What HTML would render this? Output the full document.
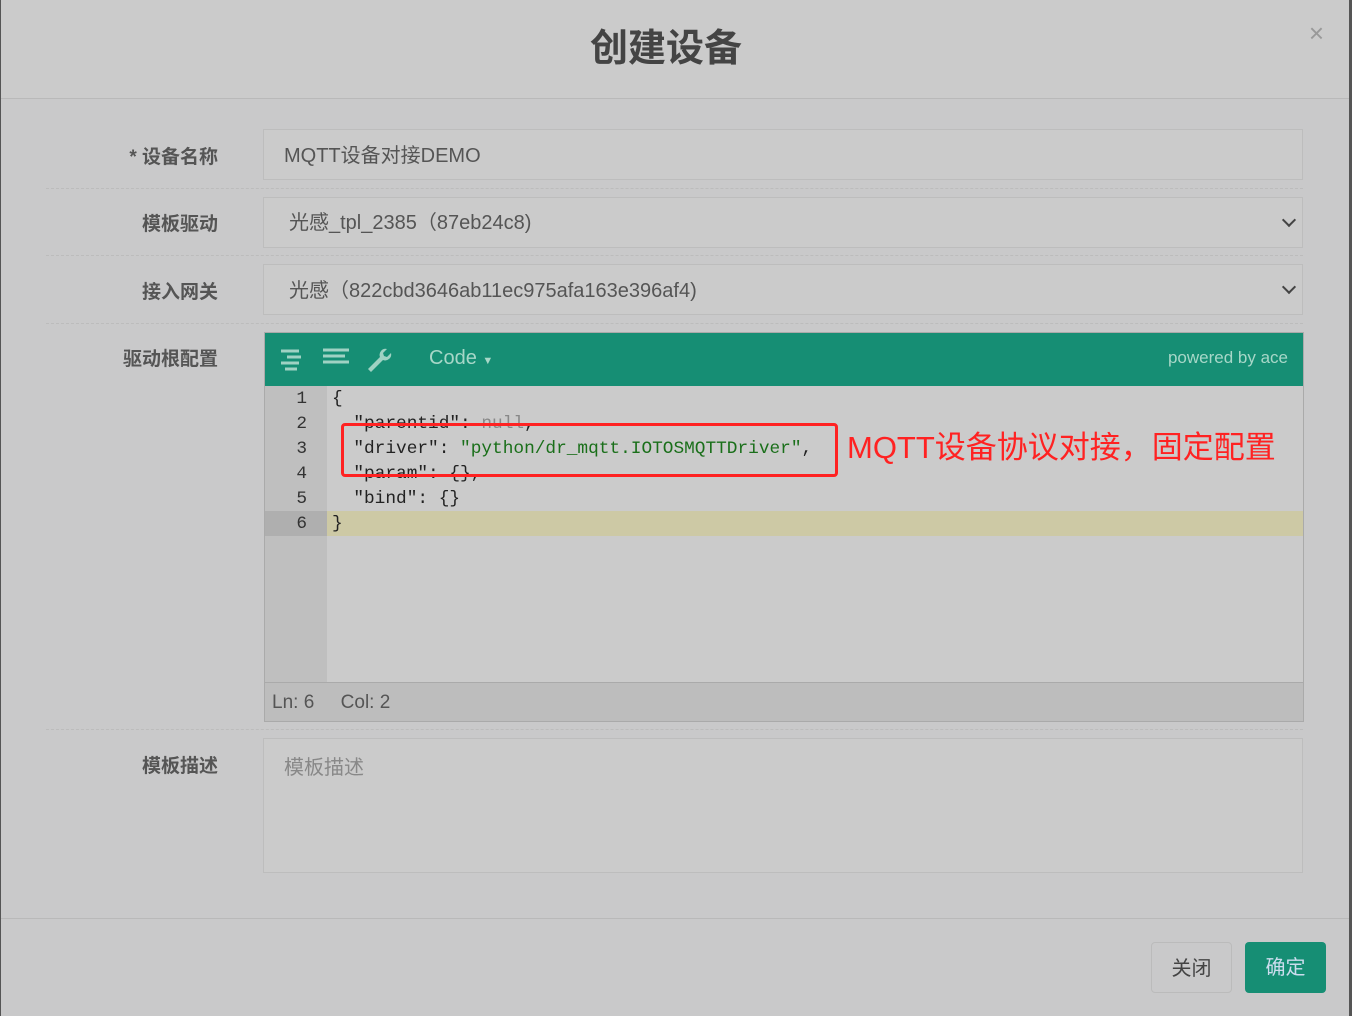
<!DOCTYPE html><html><head><meta charset="utf-8"><style>
*{box-sizing:border-box;margin:0;padding:0}
body{width:1352px;height:1016px;background:#555;font-family:"Liberation Sans","Noto Sans CJK SC",sans-serif;position:relative;overflow:hidden}
.modal{position:absolute;left:1px;top:0;width:1348px;height:1016px;background:#c9c9ca}
.hd{height:99px;background:#cbcbcb;border-bottom:1px solid #b9b9b9;text-align:center}
.hd h1{font-size:38px;line-height:99px;color:#444;font-weight:bold;margin-right:18px}
.x{position:absolute;right:25px;top:18px;font-size:26px;color:#999}
.lbl{position:absolute;right:1131px;font-size:19px;font-weight:bold;color:#555;text-align:right;white-space:nowrap}
.inp{position:absolute;left:262px;width:1040px;border:1px solid #bdbdbd;background:#cbcbcb;font-size:20px;color:#555;padding-left:20px}
.sep{position:absolute;left:45px;width:1257px;border-top:1px dashed #bcbcbc}
.chev{position:absolute;right:8px;top:17px;width:10px;height:10px;border-right:2px solid #444;border-bottom:2px solid #444;transform:rotate(45deg)}
.ed{position:absolute;left:263px;top:332px;width:1040px;height:390px;border:1px solid #aaa;background:#cbcbcb}
.tb{height:53px;background:#168e74;position:relative}
.gut{position:absolute;left:0;top:53px;width:62px;height:296px;background:#bfbfbf}
.code{font-family:"Liberation Mono",monospace;font-size:17.8px;line-height:25px;position:absolute;top:54px;left:0;width:100%}
.ln{position:absolute;left:0;width:42px;text-align:right;color:#333}
.tx{position:absolute;left:67px;color:#222;white-space:pre}
.st{position:absolute;left:0;bottom:0;width:100%;height:39px;background:#bdbdbd;border-top:1px solid #aaa;font-size:19px;color:#555;line-height:40px;padding-left:7px}
</style></head><body>
<div class="modal">
<div class="hd"><h1>创建设备</h1></div>
<div class="x">×</div>
<div class="lbl" style="top:142px">* 设备名称</div>
<div class="inp" style="top:129px;height:51px;line-height:52px">MQTT设备对接DEMO</div>
<div class="sep" style="top:188px"></div>
<div class="lbl" style="top:209px">模板驱动</div>
<div class="inp" style="top:197px;height:51px;line-height:51px;padding-left:25px">光感_tpl_2385（87eb24c8)<span class="chev"></span></div>
<div class="sep" style="top:255px"></div>
<div class="lbl" style="top:277px">接入网关</div>
<div class="inp" style="top:264px;height:51px;line-height:52px;padding-left:25px">光感（822cbd3646ab11ec975afa163e396af4)<span class="chev"></span></div>
<div class="sep" style="top:323px"></div>
<div class="lbl" style="top:344px">驱动根配置</div>
<div class="ed">
<div class="tb">
<svg style="position:absolute;left:14px;top:14px" width="120" height="26"><g stroke="#9fd2c3" stroke-width="3"><path d="M2 4h18M8 10h14M2 16h18M6 22h12"/><path d="M44 3h26M44 9h22M44 15h26"/></g><path d="M108 6a6 6 0 0 0-7 8L89 26l3 3 12-12a6 6 0 0 0 8-7l-4 4-3-1-1-3z" fill="#9fd2c3" transform="translate(0,-4)"/></svg>
<span style="position:absolute;left:164px;top:14px;font-size:20px;color:#a7d7c8">Code <span style="font-size:11px">▼</span></span>
<span style="position:absolute;right:15px;top:15px;font-size:17px;color:#a7d7c8">powered by ace</span>
</div>
<div class="gut"></div>
<div style="position:absolute;left:0;top:178px;width:62px;height:25px;background:#afafaf"></div>
<div style="position:absolute;left:62px;top:178px;right:0;height:25px;background:#cdc9a5"></div>
<div class="code">
<div class="ln" style="top:0">1</div><div class="ln" style="top:25px">2</div><div class="ln" style="top:50px">3</div><div class="ln" style="top:75px">4</div><div class="ln" style="top:100px">5</div><div class="ln" style="top:125px">6</div>
<div class="tx" style="top:0">{</div>
<div class="tx" style="top:25px">  "parentid": <span style="color:#888">null</span>,</div>
<div class="tx" style="top:50px">  "driver": <span style="color:#1a6f1a">"python/dr_mqtt.IOTOSMQTTDriver"</span>,</div>
<div class="tx" style="top:75px">  "param": {},</div>
<div class="tx" style="top:100px">  "bind": {}</div>
<div class="tx" style="top:125px">}</div>
</div>
<div class="st">Ln: 6 &nbsp; &nbsp; Col: 2</div>
</div>
<div style="position:absolute;left:340px;top:423px;width:497px;height:54px;border:3px solid #f22;border-radius:4px"></div>
<div style="position:absolute;left:846px;top:422px;font-size:31px;color:#f22;white-space:nowrap">MQTT设备协议对接，固定配置</div>
<div class="sep" style="top:729px"></div>
<div class="lbl" style="top:751px">模板描述</div>
<div class="inp" style="top:738px;height:135px;padding-top:12px;color:#888">模板描述</div>
<div style="position:absolute;left:0;top:918px;width:100%;border-top:1px solid #b9b9b9"></div>
<div style="position:absolute;left:1150px;top:942px;width:81px;height:51px;border:1px solid #bbb;border-radius:4px;text-align:center;line-height:52px;font-size:20px;color:#444">关闭</div>
<div style="position:absolute;left:1244px;top:942px;width:81px;height:51px;background:#168e74;border-radius:4px;text-align:center;line-height:52px;font-size:20px;color:#cde">确定</div>
</div>
</body></html>
